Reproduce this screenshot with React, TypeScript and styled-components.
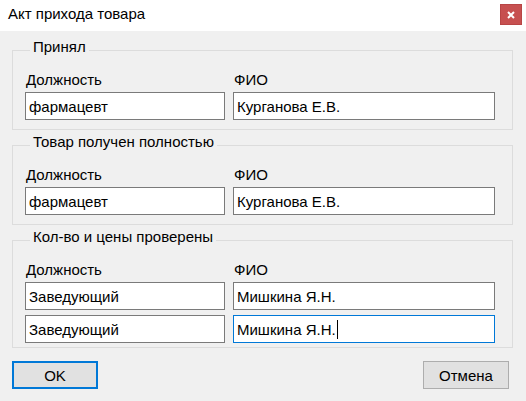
import React from "react";
import styled, { createGlobalStyle, css } from "styled-components";

const GlobalStyle = createGlobalStyle`
  html, body {
    margin: 0;
    padding: 0;
    background: #f0f0f0;
  }
  body {
    font-family: "Liberation Sans", Arial, sans-serif;
    color: #000;
  }
`;

const Window = styled.div`
  width: 526px;
  height: 401px;
  background: #f0f0f0;
  display: flex;
  flex-direction: column;
  box-sizing: border-box;
  font-size: 15px;
`;

const TitleBar = styled.div`
  height: 31px;
  background: #ffffff;
  display: flex;
  align-items: center;
  justify-content: space-between;
  padding: 0 4px 0 8px;
  flex-shrink: 0;
`;

const Title = styled.span`
  font-size: 15px;
  line-height: 18px;
  margin-top: -4px;
`;

const CloseButton = styled.button`
  width: 22px;
  height: 21px;
  margin-top: -2px;
  border: 1px solid #b84545;
  background: #c75050;
  padding: 0;
  display: flex;
  align-items: center;
  justify-content: center;
`;

const Body = styled.div`
  display: flex;
  flex-direction: column;
  padding: 8px 13px 0 12px;
`;

const Group = styled.fieldset<{ $spaced?: boolean; $tight?: boolean }>`
  margin: ${(p) => (p.$spaced ? "4px 0 0" : "0")};
  padding: 10px 17px ${(p) => (p.$tight ? "4px" : "9px")} 12px;
  border: 1px solid #dcdcdc;
  min-width: 0;
  display: flex;
  flex-direction: column;
  gap: 5px;
`;

const Caption = styled.legend`
  margin-left: 5px;
  padding: 0 3px 6px;
  font-size: 15px;
  line-height: 16px;
`;

const Row = styled.div`
  display: grid;
  grid-template-columns: 200px 262px;
  column-gap: 8px;
`;

const HeadRow = styled(Row)`
  margin-bottom: -1px;
`;

const Label = styled.span`
  font-size: 15px;
  line-height: 17px;
  padding-left: 1px;
`;

const Field = styled.div<{ $focused?: boolean }>`
  height: 28px;
  box-sizing: border-box;
  background: #ffffff;
  border: 1px solid #7a7a7a;
  padding: 0 3px;
  display: flex;
  align-items: center;
  font-size: 15px;
  white-space: nowrap;
  overflow: hidden;
  ${(p) =>
    p.$focused &&
    css`
      border-color: #0078d7;
    `}
`;

const Caret = styled.span`
  display: inline-block;
  width: 1px;
  height: 19px;
  background: #000;
  margin-left: 1px;
`;

const Footer = styled.div`
  display: flex;
  justify-content: space-between;
  padding: 13px 4px 0 0;
`;

const Button = styled.button<{ $default?: boolean }>`
  width: 86px;
  height: 28px;
  box-sizing: border-box;
  background: #e1e1e1;
  border: 1px solid #adadad;
  font-family: "Liberation Sans", Arial, sans-serif;
  font-size: 15px;
  color: #000;
  padding: 0;
  ${(p) =>
    p.$default &&
    css`
      border: 2px solid #0078d7;
    `}
`;

type Person = { post: string; name: string; focused?: boolean };

const groups: { caption: string; rows: Person[] }[] = [
  { caption: "Принял", rows: [{ post: "фармацевт", name: "Курганова Е.В." }] },
  {
    caption: "Товар получен полностью",
    rows: [{ post: "фармацевт", name: "Курганова Е.В." }],
  },
  {
    caption: "Кол-во и цены проверены",
    rows: [
      { post: "Заведующий", name: "Мишкина Я.Н." },
      { post: "Заведующий", name: "Мишкина Я.Н.", focused: true },
    ],
  },
];

export default function App() {
  return (
    <>
      <GlobalStyle />
      <Window>
        <TitleBar>
          <Title>Акт прихода товара</Title>
          <CloseButton aria-label="Закрыть">
            <svg width="8" height="8" viewBox="0 0 8 8">
              <path d="M1 1 L7 7 M7 1 L1 7" stroke="#fff" strokeWidth="2" />
            </svg>
          </CloseButton>
        </TitleBar>
        <Body>
          {groups.map((g, i) => (
            <Group key={g.caption} $spaced={i > 0} $tight={g.rows.length > 1}>
              <Caption>{g.caption}</Caption>
              <HeadRow>
                <Label>Должность</Label>
                <Label>ФИО</Label>
              </HeadRow>
              {g.rows.map((r, j) => (
                <Row key={j}>
                  <Field>{r.post}</Field>
                  <Field $focused={r.focused}>
                    {r.name}
                    {r.focused && <Caret />}
                  </Field>
                </Row>
              ))}
            </Group>
          ))}
          <Footer>
            <Button $default>OK</Button>
            <Button>Отмена</Button>
          </Footer>
        </Body>
      </Window>
    </>
  );
}
